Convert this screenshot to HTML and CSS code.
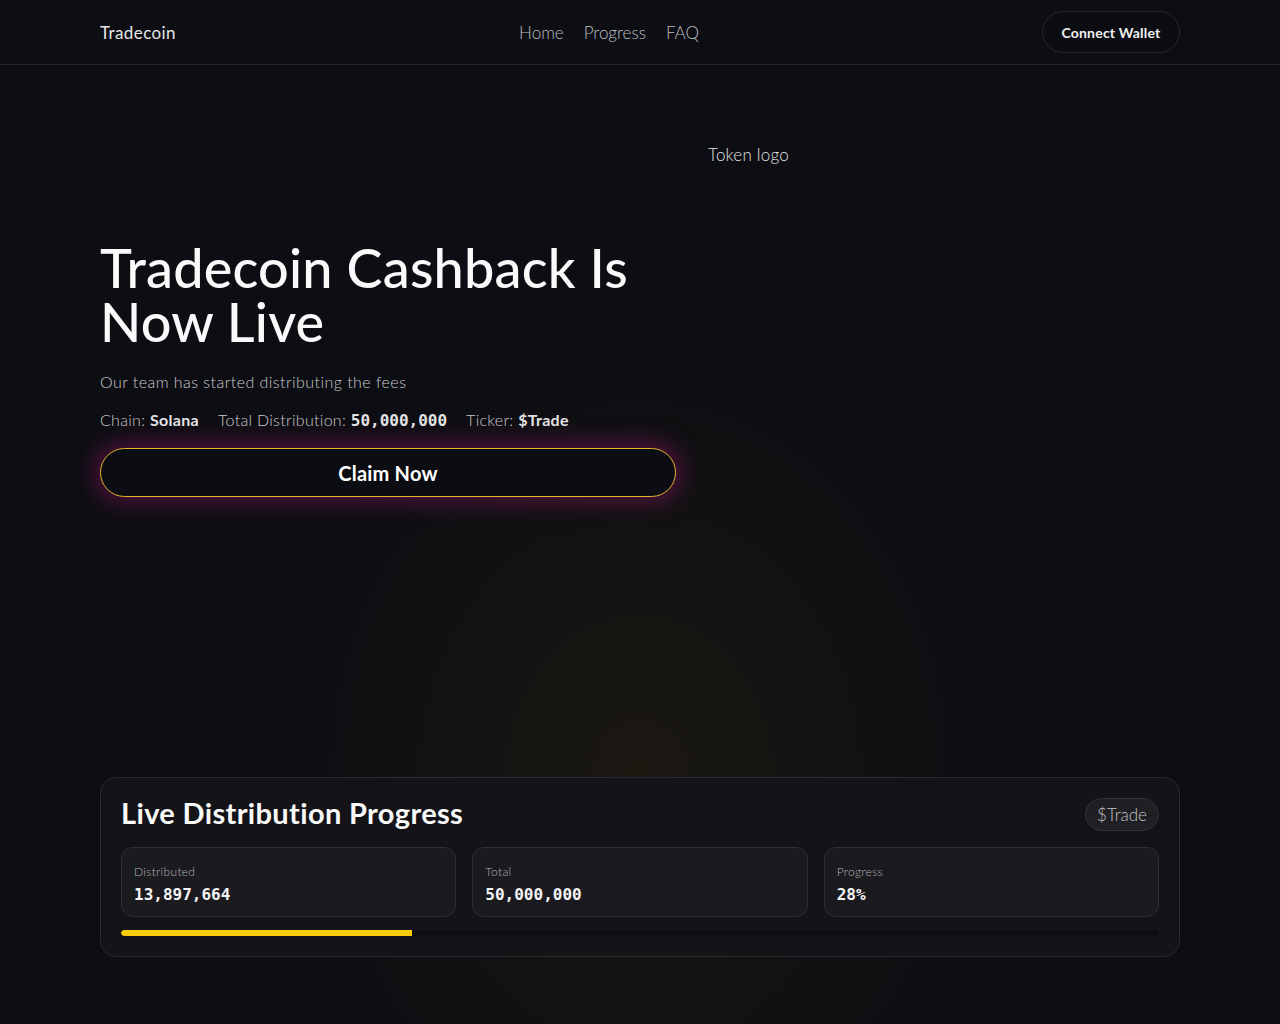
FILE: index.html
```html
<!DOCTYPE html>
<html>
<head>
  <meta charset="utf-8">
  <title>Tradecoin Cashback</title>
  <link rel="stylesheet" href="styles.css">
</head>
<body>
  <header class="topbar">
    <div class="container topbar-inner">
      <a class="brand" href="#">Tradecoin</a>
      <nav class="nav">
        <a href="#">Home</a>
        <a href="#">Progress</a>
        <a href="#">FAQ</a>
      </nav>
      <button class="wallet-btn">Connect Wallet</button>
    </div>
  </header>

  <section class="hero container">
    <div class="hero-text">
      <h1>Tradecoin Cashback Is Now Live</h1>
      <p class="lead">Our team has started distributing the fees</p>
      <div class="facts">
        <span>Chain: <b>Solana</b></span>
        <span>Total Distribution: <b class="mono">50,000,000</b></span>
        <span>Ticker: <b>$Trade</b></span>
      </div>
      <button class="claim-btn">Claim Now</button>
    </div>
    <div class="hero-logo">
      <span class="logo-alt">Token logo</span>
    </div>
  </section>

  <section class="container">
    <div class="progress-card">
      <div class="card-head">
        <h2>Live Distribution Progress</h2>
        <span class="badge">$Trade</span>
      </div>
      <div class="stats">
        <div class="stat">
          <div class="stat-label">Distributed</div>
          <div class="stat-value mono">13,897,664</div>
        </div>
        <div class="stat">
          <div class="stat-label">Total</div>
          <div class="stat-value mono">50,000,000</div>
        </div>
        <div class="stat">
          <div class="stat-label">Progress</div>
          <div class="stat-value mono">28%</div>
        </div>
      </div>
      <div class="bar"><div class="bar-fill" style="width: 28%;"></div></div>
    </div>
  </section>
</body>
</html>
```

FILE: styles.css
```css
body {
  margin: 0;
  min-height: 1024px;
  font-family: Lato, "Noto Sans", sans-serif;
  color: #e8e8ea;
  background-color: #0d0e13;
  background-image: radial-gradient(ellipse 360px 440px at 50% 76%, rgba(70, 55, 12, 0.24), rgba(13, 14, 19, 0) 100%);
}

.container {
  width: 1080px;
  margin: 0 auto;
}

/* Barra superior */
.topbar {
  height: 64px;
  border-bottom: 1px solid #24252a;
}

.topbar-inner {
  display: flex;
  align-items: center;
  justify-content: space-between;
  height: 64px;
}

.brand {
  width: 76px;
  color: #e6e6e6;
  text-decoration: none;
  font-size: 17px;
  letter-spacing: 0.4px;
}

.nav {
  display: flex;
  gap: 20px;
}

.nav a {
  color: #bdbec4;
  text-decoration: none;
  font-size: 17px;
  font-weight: 300;
}

.wallet-btn {
  background: #0c0d12;
  color: #f2f2f2;
  border: 1px solid #26272c;
  border-radius: 21px;
  height: 42px;
  width: 138px;
  font-family: inherit;
  font-size: 14px;
  font-weight: 700;
  letter-spacing: 0.2px;
  cursor: pointer;
}

/* Hero */
.hero {
  display: grid;
  grid-template-columns: 576px 1fr;
  gap: 32px;
  align-items: start;
  padding-top: 79px;
}

.hero-text {
  padding-top: 97px;
}

.hero h1 {
  margin: 0;
  font-size: 54px;
  line-height: 54px;
  font-weight: 500;
  color: #fafafa;
  letter-spacing: 0.2px;
}

.lead {
  margin: 23px 0 0;
  font-size: 16px;
  font-weight: 300;
  letter-spacing: 0.45px;
  color: #c9c9cd;
}

.facts {
  display: flex;
  gap: 19px;
  margin-top: 19px;
  font-size: 16px;
  font-weight: 300;
  letter-spacing: 0.3px;
  color: #c9c9cd;
}

.facts b {
  font-weight: 700;
  color: #e2e2e4;
}

.mono {
  font-family: "DejaVu Sans Mono", "Liberation Mono", monospace;
  letter-spacing: 0;
}

.claim-btn {
  display: block;
  width: 576px;
  height: 49px;
  margin-top: 18px;
  background: #0c0d12;
  color: #fff;
  border: 1px solid #e3b52a;
  border-radius: 25px;
  box-shadow: 0 0 22px 6px rgba(140, 20, 100, 0.5);
  font-family: inherit;
  font-size: 20px;
  font-weight: 700;
  letter-spacing: 0.2px;
  cursor: pointer;
}

.hero-logo {
  height: 451px;
}

.logo-alt {
  display: block;
  font-size: 17px;
  font-weight: 300;
  letter-spacing: 0.2px;
  color: #e0e0e2;
}

/* Tarjeta de progreso */
.progress-card {
  margin-top: 182px;
  background: #141418;
  border: 1px solid #2a2a2f;
  border-radius: 16px;
  padding: 20px;
}

.card-head {
  display: flex;
  justify-content: space-between;
  align-items: center;
}

.card-head h2 {
  margin: 0;
  padding-bottom: 3px;
  font-size: 29px;
  line-height: 30px;
  font-weight: 700;
  letter-spacing: 0.35px;
  color: #fafafa;
}

.badge {
  background: #202024;
  border: 1px solid #323237;
  border-radius: 17px;
  padding: 5px 11px;
  line-height: 21px;
  font-size: 17px;
  font-weight: 300;
  color: #c2c2c6;
}

.stats {
  display: grid;
  grid-template-columns: repeat(3, 1fr);
  gap: 16px;
  margin-top: 16px;
}

.stat {
  height: 70px;
  box-sizing: border-box;
  background: #1b1b1f;
  border: 1px solid #2e2e33;
  border-radius: 12px;
  padding: 16px 12px 0;
}

.stat-label {
  font-size: 12px;
  font-weight: 300;
  letter-spacing: 0.3px;
  color: #b4b4b8;
}

.stat-value {
  margin-top: 6px;
  font-size: 16px;
  font-weight: 700;
  color: #f4f4f6;
}

.bar {
  height: 6px;
  margin-top: 13px;
  background: #0e0e11;
  border-radius: 3px;
  overflow: hidden;
}

.bar-fill {
  height: 100%;
  background: #f7cd0a;
  border-radius: 3px 0 0 3px;
}
```
